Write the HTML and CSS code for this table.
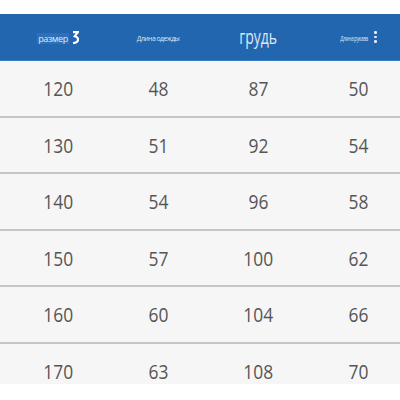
FILE: index.html
```html
<!DOCTYPE html>
<html lang="ru">
<head>
<meta charset="utf-8">
<link rel="stylesheet" href="styles.css">
</head>
<body>
<div class="table">
  <div class="head">
    <div class="hcell"><span class="tag">размер</span><svg class="squig" width="7" height="13" viewBox="0 0 7 13"><path d="M1 1.2 L5.8 1.2 L2.8 5.2 Q6.3 6 6 9 Q5.5 12 1 12" fill="none" stroke="#ffffff" stroke-width="2.2"/></svg></div>
    <div class="hcell"><span class="tiny">Длина одежды</span></div>
    <div class="hcell"><span class="big">грудь</span></div>
    <div class="hcell"><span class="tiny narrow">Длина рукава</span><span class="dots"><i></i><i></i><i></i></span></div>
  </div>
  <div class="row"><span>120</span><span>48</span><span>87</span><span>50</span></div>
  <div class="row"><span>130</span><span>51</span><span>92</span><span>54</span></div>
  <div class="row"><span>140</span><span>54</span><span>96</span><span>58</span></div>
  <div class="row"><span>150</span><span>57</span><span>100</span><span>62</span></div>
  <div class="row"><span>160</span><span>60</span><span>104</span><span>66</span></div>
  <div class="row last"><span>170</span><span>63</span><span>108</span><span>70</span></div>
</div>
</body>
</html>
```
FILE: styles.css
```css
html, body {
  margin: 0;
  padding: 0;
  background: #ffffff;
}
body {
  font-family: "Open Sans", "Noto Sans", sans-serif;
}
.table {
  margin-top: 14px;
  width: 400px;
  background: #f6f6f6;
}
.head {
  height: 47px;
  background: #2366b0;
  display: grid;
  grid-template-columns: repeat(4, 100px);
  padding-left: 8px;
  box-sizing: border-box;
  border-bottom: 1px solid #3b7cc0;
}
.hcell {
  display: flex;
  align-items: center;
  justify-content: center;
  gap: 3px;
  color: #e6eef8;
}
.tag {
  font-size: 9px;
  letter-spacing: -0.4px;
  background: #3170b6;
  padding: 0 1px;
  line-height: 11px;
  margin-top: 2px;
  color: #dfe8f3;
}
.squig {
  display: block;
}
.tiny {
  font-size: 8px;
  letter-spacing: -0.6px;
  transform: scaleX(0.85);
  color: #dbe6f3;
}
.narrow {
  transform: scaleX(0.6);
  margin-right: -12px;
  margin-left: -8px;
}
.big {
  font-size: 20px;
  color: #dde8f4;
  transform: scaleX(0.7);
  margin-bottom: 1px;
}
.dots {
  display: flex;
  flex-direction: column;
  gap: 2px;
  margin-left: 6px;
}
.dots i {
  display: block;
  width: 2.5px;
  height: 2.5px;
  border-radius: 50%;
  background: #e6eef8;
}
.row {
  height: 56.5px;
  box-sizing: border-box;
  border-bottom: 2px solid #c6c6c6;
  display: grid;
  grid-template-columns: repeat(4, 100px);
  padding-left: 8px;
  align-items: center;
  justify-items: center;
  font-size: 20px;
  line-height: 24px;
  color: #555555;
}
.row span {
  padding-top: 2px;
  transform: scaleX(0.87);
}
.row.last {
  height: 40.5px;
  border-bottom: none;
  align-items: end;
}
.row.last span {
  padding-top: 0;
  padding-bottom: 2px;
  line-height: 20px;
}
```
